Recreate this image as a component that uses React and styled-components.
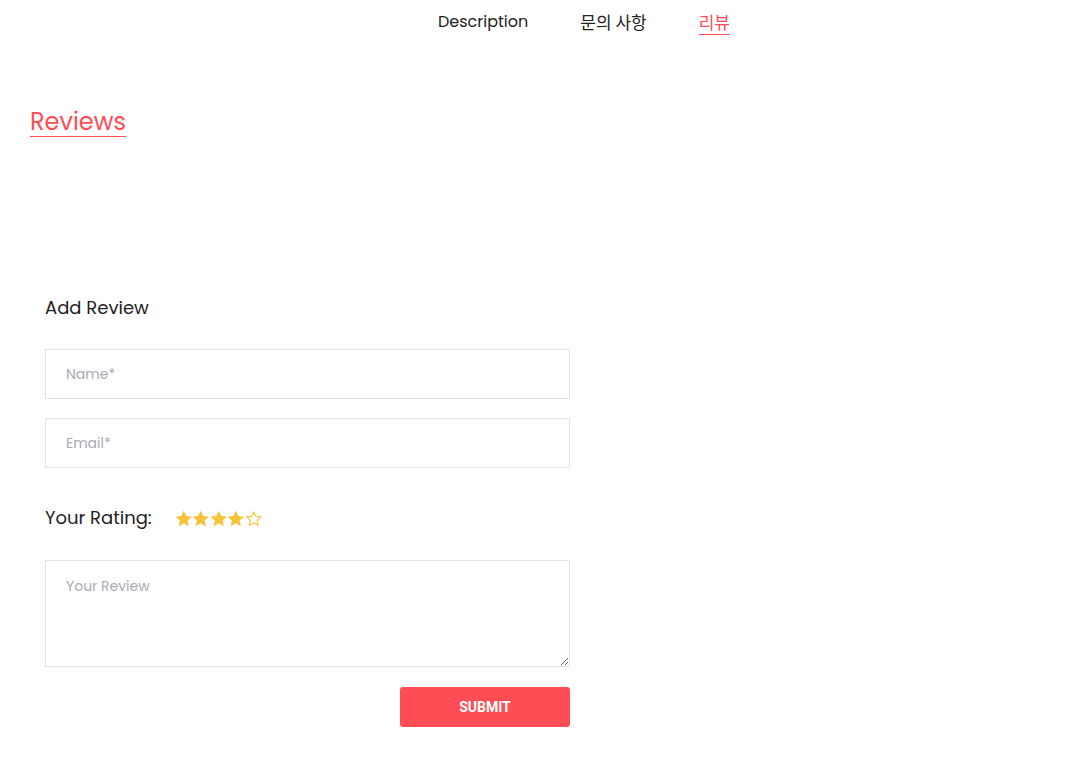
import React from "react";
import styled, { createGlobalStyle } from "styled-components";

const Global = createGlobalStyle`
  body {
    margin: 0;
    background: #fff;
    font-family: "Poppins", Inter, "Noto Sans", "Noto Sans CJK KR", sans-serif;
    color: #222;
  }
  * { box-sizing: border-box; }
`;

const Tabs = styled.nav`
  display: flex;
  justify-content: center;
  align-items: flex-start;
  gap: 52px;
  padding: 11px 0 0 80px;
  height: 36px;
`;

const Tab = styled.a`
  font-size: ${(p) => (p.ko ? "17px" : "16px")};
  line-height: 22px;
  height: 24px;
  color: ${(p) => (p.active ? "#ff4d55" : "#222")};
  border-bottom: 1px solid ${(p) => (p.active ? "#ff4d55" : "transparent")};
  font-family: ${(p) => (p.ko ? '"Noto Sans CJK KR", sans-serif' : "inherit")};
  font-weight: 400;
  cursor: pointer;
`;

const Section = styled.section`
  padding: 72px 30px 0;
`;

const Heading = styled.h2`
  display: inline-block;
  margin: 0;
  font-size: 24px;
  font-weight: 400;
  line-height: 28px;
  color: #ff4d55;
  border-bottom: 1px solid #ff4d55;
`;

const Form = styled.form`
  width: 540px;
  padding: 158px 0 0 15px;
  display: flex;
  flex-direction: column;
`;

const FormTitle = styled.h3`
  margin: 0 0 28px;
  font-size: 18px;
  font-weight: 400;
  line-height: 26px;
  color: #222;
`;

const Input = styled.input`
  width: 525px;
  height: 50px;
  border: 1px solid #e2e2e2;
  padding: 0 20px;
  font-family: inherit;
  font-size: 14px;
  margin-bottom: 19px;
  outline: none;
  &::placeholder { color: #aaa9b8; }
`;

const RatingRow = styled.div`
  display: flex;
  align-items: center;
  gap: 23px;
  margin: 18px 0 29px;
`;

const RatingLabel = styled.span`
  font-size: 18px;
  line-height: 26px;
  color: #222;
`;

const Stars = styled.div`
  display: flex;
  align-items: center;
`;

const TextArea = styled.textarea`
  width: 525px;
  height: 107px;
  border: 1px solid #e2e2e2;
  padding: 15px 20px;
  font-family: inherit;
  font-size: 14px;
  resize: vertical;
  outline: none;
  display: block;
  &::placeholder { color: #aaa9b8; }
`;

const Actions = styled.div`
  width: 525px;
  display: flex;
  justify-content: flex-end;
  margin-top: 20px;
`;

const Submit = styled.button`
  width: 170px;
  height: 40px;
  border: 0;
  border-radius: 3px;
  background: #ff4d55;
  color: #fff;
  font-family: Roboto, sans-serif;
  font-weight: 700;
  font-size: 14px;
  cursor: pointer;
`;

const Star = ({ filled }) => (
  <svg width="17.5" height="17" viewBox="1.6 2 20.8 19.4">
    <path
      d="M12 2.5l2.9 6.3 6.9.7-5.2 4.6 1.5 6.8L12 17.4l-6.1 3.5 1.5-6.8-5.2-4.6 6.9-.7z"
      fill={filled ? "#f8c13a" : "none"}
      stroke="#f8c13a"
      strokeWidth={filled ? 0 : 1.5}
      strokeLinejoin="round"
      transform={filled ? undefined : "translate(12 12) scale(0.88) translate(-12 -12)"}
    />
  </svg>
);

export default function App() {
  return (
    <>
      <Global />
      <Tabs>
        <Tab>Description</Tab>
        <Tab ko>문의 사항</Tab>
        <Tab ko active>리뷰</Tab>
      </Tabs>
      <Section>
        <Heading>Reviews</Heading>
        <Form onSubmit={(e) => e.preventDefault()}>
          <FormTitle>Add Review</FormTitle>
          <Input placeholder="Name*" />
          <Input placeholder="Email*" />
          <RatingRow>
            <RatingLabel>Your Rating:</RatingLabel>
            <Stars>
              {[1, 2, 3, 4, 5].map((n) => (
                <Star key={n} filled={n <= 4} />
              ))}
            </Stars>
          </RatingRow>
          <TextArea placeholder="Your Review" />
          <Actions>
            <Submit type="submit">SUBMIT</Submit>
          </Actions>
        </Form>
      </Section>
    </>
  );
}
